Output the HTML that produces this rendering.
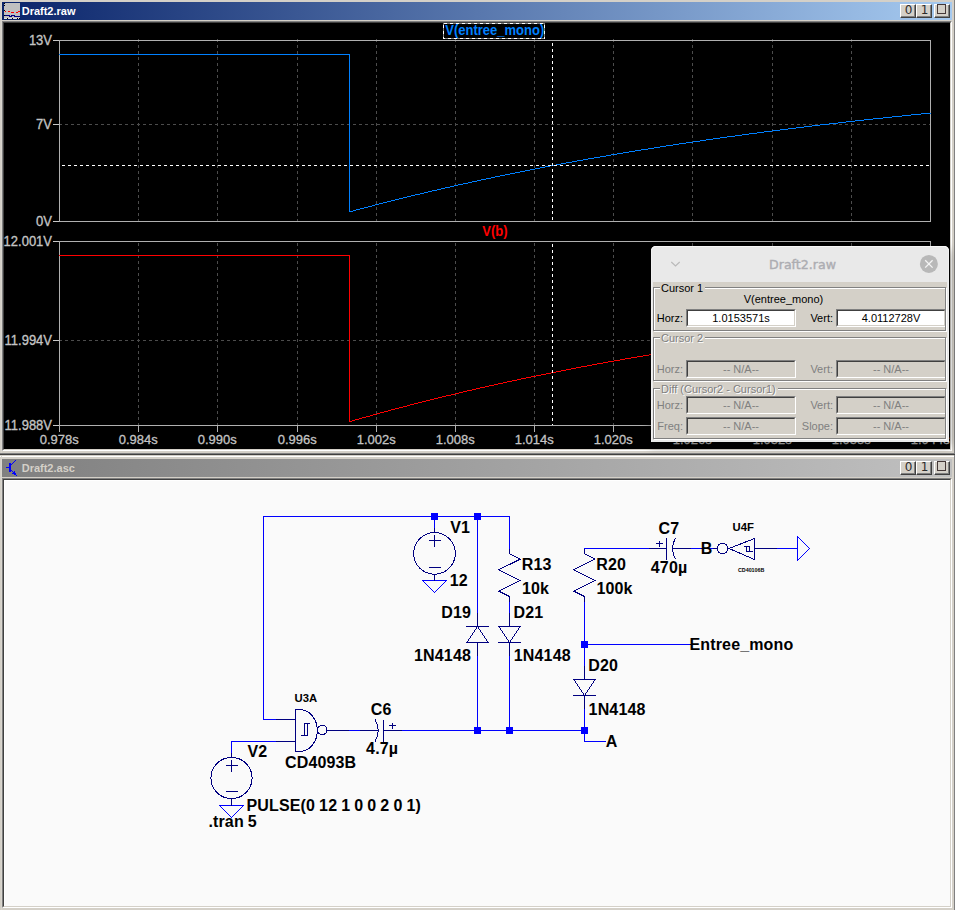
<!DOCTYPE html>
<html><head><meta charset="utf-8"><title>Draft2</title>
<style>
html,body{margin:0;padding:0}
body{width:955px;height:910px;background:#d4d0c8;overflow:hidden;position:relative;font-family:"Liberation Sans",sans-serif}
.abs{position:absolute}
.tb{position:absolute;left:2px;width:950px;height:18px}
.tt{position:absolute;left:19.7px;top:0;height:18px;line-height:19px;font-weight:bold;font-size:11px;white-space:nowrap}
.btn{position:absolute;top:2px;width:16px;height:14px;box-sizing:border-box;background:#d4d0c8;border:1px solid;border-color:#fff #404040 #404040 #fff;box-shadow:inset -1px -1px 0 #808080;font-family:"DejaVu Sans",sans-serif;font-size:12px;line-height:11px;text-align:center;color:#2c2c2c;padding-left:1px}
.sunk{position:absolute;box-sizing:border-box;border:1px solid;border-color:#808080 #fff #fff #808080}
.sunk>i{position:absolute;left:0;top:0;right:0;bottom:0;border:1px solid;border-color:#404040 #d4d0c8 #d4d0c8 #404040;display:block}
svg{position:absolute;left:0;top:0}
svg text{font-family:"Liberation Sans",sans-serif}
.dl{position:absolute;font-size:11px;line-height:13px;white-space:nowrap;color:#000}
.dis{color:#808080}
.grp{position:absolute;box-sizing:border-box;border:1px solid #808080;box-shadow:inset 1px 1px 0 #fff,1px 1px 0 #fff}
.gl{position:absolute;font-size:11px;line-height:13px;background:#d4d0c8;padding:0 2px 0 1px;white-space:nowrap}
.ed{position:absolute;box-sizing:border-box;width:110px;height:18px;border:1px solid;border-color:#808080 #fff #fff #808080;font-size:11px;text-align:center;line-height:16px;color:#000}
.ed.dis{color:#808080}
.ed>i{position:absolute;left:0;top:0;right:0;bottom:0;border:1px solid;border-color:#404040 #d4d0c8 #d4d0c8 #404040;display:block}
.ed>span{position:relative}
</style></head><body>

<div class="abs" style="left:1px;top:0;width:1px;height:453px;background:#d9d6cf"></div>
<div class="abs" style="left:954px;top:0;width:1px;height:910px;background:#808080"></div>
<div class="abs" style="left:0;top:453px;width:955px;height:1px;background:#808080"></div>
<div class="abs" style="left:0;top:454px;width:955px;height:1px;background:#404040"></div>
<div class="abs" style="left:0;top:455px;width:954px;height:1px;background:#d4d0c8"></div>
<div class="abs" style="left:0;top:456px;width:954px;height:1px;background:#fff"></div>
<div class="abs" style="left:1px;top:456px;width:1px;height:454px;background:#d9d6cf"></div>
<div class="tb" style="top:2px;background:linear-gradient(to right,#0a246a,#a6caf0)">
<svg width="16" height="16" style="left:2px;top:1px" shape-rendering="crispEdges"><rect width="16" height="16" fill="#c0c0c0"/><rect x="0" y="0" width="1" height="1" fill="#000"/><rect x="0" y="2" width="1" height="1" fill="#000"/><rect x="0" y="7" width="1" height="1" fill="#000"/><rect x="0" y="12" width="1" height="1" fill="#000"/><rect x="1" y="8" width="1" height="1" fill="#f00"/><rect x="4" y="8" width="2" height="1" fill="#f00"/><rect x="7" y="9" width="3" height="1" fill="#f00"/><rect x="12" y="9" width="2" height="1" fill="#f00"/><rect x="14" y="8" width="2" height="1" fill="#f00"/><path d="M1 12.5H5L6 13.5H7L8 12.5H10L11 13.5H16" stroke="#000080" fill="none"/><rect x="0" y="15" width="16" height="1" fill="#e0e0e0"/><rect x="3" y="15" width="1" height="1" fill="#000"/><rect x="8" y="15" width="1" height="1" fill="#000"/><rect x="13" y="15" width="1" height="1" fill="#000"/><rect x="15" y="15" width="1" height="1" fill="#000"/></svg>
<div class="tt" style="color:#fff">Draft2.raw</div>
<div class="btn" style="left:898px">0</div><div class="btn" style="left:914px">1</div><div class="btn" style="left:932px"><span style="position:absolute;left:2px;top:-1px;width:7px;height:8px;border:1px solid #453838"></span></div>
</div>
<div class="sunk" style="left:2px;top:21px;width:950px;height:430px"><i></i></div>
<div class="abs" style="left:4px;top:23px;width:946px;height:426px;background:#000"></div>
<div class="tb" style="top:459px;background:linear-gradient(to right,#808080,#c0c0c0)">
<svg width="16" height="18" style="left:2px;top:0" shape-rendering="crispEdges"><g fill="#0000ff"><rect x="5" y="4" width="2" height="9"/><rect x="2" y="8" width="3" height="1"/><rect x="7" y="5" width="1" height="1"/><rect x="8" y="4" width="1" height="1"/><rect x="9" y="3" width="1" height="1"/><rect x="10" y="2" width="1" height="1"/><rect x="11" y="1" width="1" height="1"/><rect x="7" y="11" width="1" height="1"/><rect x="8" y="12" width="1" height="1"/><rect x="9" y="13" width="1" height="1"/><rect x="10" y="14" width="1" height="1"/><rect x="11" y="15" width="1" height="1"/><rect x="12" y="16" width="1" height="1"/><rect x="8" y="14" width="1" height="1"/><rect x="9" y="14" width="1" height="1"/><rect x="11" y="14" width="1" height="1"/><rect x="10" y="12" width="1" height="1"/><rect x="10" y="13" width="1" height="1"/><rect x="10" y="15" width="1" height="1"/></g></svg>
<div class="tt" style="color:#d4d0c8">Draft2.asc</div>
<div class="btn" style="left:898px">0</div><div class="btn" style="left:914px">1</div><div class="btn" style="left:932px"><span style="position:absolute;left:2px;top:-1px;width:7px;height:8px;border:1px solid #453838"></span></div>
</div>
<div class="sunk" style="left:2px;top:478px;width:950px;height:430px"><i></i></div>
<div class="abs" style="left:4px;top:480px;width:946px;height:426px;background:#fafafa;box-shadow:inset 1px 1px 0 #fff"></div>
<svg width="950" height="449" viewBox="0 0 950 449">
<g shape-rendering="crispEdges" fill="none">
<path d="M138.5 39V221" stroke="#4c4c4c" stroke-dasharray="3 3"/><path d="M138.5 243V425" stroke="#4c4c4c" stroke-dasharray="3 3"/>
<path d="M217.5 39V221" stroke="#4c4c4c" stroke-dasharray="3 3"/><path d="M217.5 243V425" stroke="#4c4c4c" stroke-dasharray="3 3"/>
<path d="M297.5 39V221" stroke="#4c4c4c" stroke-dasharray="3 3"/><path d="M297.5 243V425" stroke="#4c4c4c" stroke-dasharray="3 3"/>
<path d="M376.5 39V221" stroke="#4c4c4c" stroke-dasharray="3 3"/><path d="M376.5 243V425" stroke="#4c4c4c" stroke-dasharray="3 3"/>
<path d="M455.5 39V221" stroke="#4c4c4c" stroke-dasharray="3 3"/><path d="M455.5 243V425" stroke="#4c4c4c" stroke-dasharray="3 3"/>
<path d="M534.5 39V221" stroke="#4c4c4c" stroke-dasharray="3 3"/><path d="M534.5 243V425" stroke="#4c4c4c" stroke-dasharray="3 3"/>
<path d="M613.5 39V221" stroke="#4c4c4c" stroke-dasharray="3 3"/><path d="M613.5 243V425" stroke="#4c4c4c" stroke-dasharray="3 3"/>
<path d="M692.5 39V221" stroke="#4c4c4c" stroke-dasharray="3 3"/><path d="M692.5 243V425" stroke="#4c4c4c" stroke-dasharray="3 3"/>
<path d="M772.5 39V221" stroke="#4c4c4c" stroke-dasharray="3 3"/><path d="M772.5 243V425" stroke="#4c4c4c" stroke-dasharray="3 3"/>
<path d="M851.5 39V221" stroke="#4c4c4c" stroke-dasharray="3 3"/><path d="M851.5 243V425" stroke="#4c4c4c" stroke-dasharray="3 3"/>
<path d="M59 124.5H930" stroke="#4c4c4c" stroke-dasharray="3 3"/>
<path d="M59 340.5H930" stroke="#4c4c4c" stroke-dasharray="3 3"/>
<rect x="59.5" y="40.5" width="871" height="181" stroke="#b0b0b0"/>
<rect x="59.5" y="241.5" width="871" height="184" stroke="#b0b0b0"/>
<path d="M53 40.5H59" stroke="#c8c8c8"/>
<path d="M53 124.5H59" stroke="#c8c8c8"/>
<path d="M53 221.5H59" stroke="#c8c8c8"/>
<path d="M53 241.5H59" stroke="#c8c8c8"/>
<path d="M53 340.5H59" stroke="#c8c8c8"/>
<path d="M53 425.5H59" stroke="#c8c8c8"/>
<path d="M59.5 425V432" stroke="#b0b0b0"/>
<path d="M138.5 425V432" stroke="#b0b0b0"/>
<path d="M217.5 425V432" stroke="#b0b0b0"/>
<path d="M297.5 425V432" stroke="#b0b0b0"/>
<path d="M376.5 425V432" stroke="#b0b0b0"/>
<path d="M455.5 425V432" stroke="#b0b0b0"/>
<path d="M534.5 425V432" stroke="#b0b0b0"/>
<path d="M613.5 425V432" stroke="#b0b0b0"/>
<path d="M692.5 425V432" stroke="#b0b0b0"/>
<path d="M772.5 425V432" stroke="#b0b0b0"/>
<path d="M851.5 425V432" stroke="#b0b0b0"/>
<path d="M930.5 425V432" stroke="#b0b0b0"/>
<path d="M59 54.5 L349.5 54.5 L349.5 211.5 L350.5 211.5 L351.5 211.5 L352.5 211.5 L353.5 210.5 L354.5 210.5 L355.5 210.5 L356.5 209.5 L357.5 209.5 L358.5 209.5 L359.5 209.5 L360.5 208.5 L361.5 208.5 L362.5 208.5 L363.5 208.5 L364.5 207.5 L365.5 207.5 L366.5 207.5 L367.5 207.5 L368.5 206.5 L369.5 206.5 L370.5 206.5 L371.5 206.5 L372.5 205.5 L373.5 205.5 L374.5 205.5 L375.5 204.5 L376.5 204.5 L377.5 204.5 L378.5 204.5 L379.5 203.5 L380.5 203.5 L381.5 203.5 L382.5 203.5 L383.5 202.5 L384.5 202.5 L385.5 202.5 L386.5 202.5 L387.5 201.5 L388.5 201.5 L389.5 201.5 L390.5 201.5 L391.5 200.5 L392.5 200.5 L393.5 200.5 L394.5 200.5 L395.5 199.5 L396.5 199.5 L397.5 199.5 L398.5 199.5 L399.5 198.5 L400.5 198.5 L401.5 198.5 L402.5 198.5 L403.5 197.5 L404.5 197.5 L405.5 197.5 L406.5 197.5 L407.5 196.5 L408.5 196.5 L409.5 196.5 L410.5 196.5 L411.5 195.5 L412.5 195.5 L413.5 195.5 L414.5 195.5 L415.5 194.5 L416.5 194.5 L417.5 194.5 L418.5 194.5 L419.5 194.5 L420.5 193.5 L421.5 193.5 L422.5 193.5 L423.5 193.5 L424.5 192.5 L425.5 192.5 L426.5 192.5 L427.5 192.5 L428.5 191.5 L429.5 191.5 L430.5 191.5 L431.5 191.5 L432.5 190.5 L433.5 190.5 L434.5 190.5 L435.5 190.5 L436.5 190.5 L437.5 189.5 L438.5 189.5 L439.5 189.5 L440.5 189.5 L441.5 188.5 L442.5 188.5 L443.5 188.5 L444.5 188.5 L445.5 187.5 L446.5 187.5 L447.5 187.5 L448.5 187.5 L449.5 187.5 L450.5 186.5 L451.5 186.5 L452.5 186.5 L453.5 186.5 L454.5 185.5 L455.5 185.5 L456.5 185.5 L457.5 185.5 L458.5 184.5 L459.5 184.5 L460.5 184.5 L461.5 184.5 L462.5 184.5 L463.5 183.5 L464.5 183.5 L465.5 183.5 L466.5 183.5 L467.5 183.5 L468.5 182.5 L469.5 182.5 L470.5 182.5 L471.5 182.5 L472.5 181.5 L473.5 181.5 L474.5 181.5 L475.5 181.5 L476.5 181.5 L477.5 180.5 L478.5 180.5 L479.5 180.5 L480.5 180.5 L481.5 179.5 L482.5 179.5 L483.5 179.5 L484.5 179.5 L485.5 179.5 L486.5 178.5 L487.5 178.5 L488.5 178.5 L489.5 178.5 L490.5 178.5 L491.5 177.5 L492.5 177.5 L493.5 177.5 L494.5 177.5 L495.5 176.5 L496.5 176.5 L497.5 176.5 L498.5 176.5 L499.5 176.5 L500.5 175.5 L501.5 175.5 L502.5 175.5 L503.5 175.5 L504.5 175.5 L505.5 174.5 L506.5 174.5 L507.5 174.5 L508.5 174.5 L509.5 174.5 L510.5 173.5 L511.5 173.5 L512.5 173.5 L513.5 173.5 L514.5 173.5 L515.5 172.5 L516.5 172.5 L517.5 172.5 L518.5 172.5 L519.5 172.5 L520.5 171.5 L521.5 171.5 L522.5 171.5 L523.5 171.5 L524.5 171.5 L525.5 170.5 L526.5 170.5 L527.5 170.5 L528.5 170.5 L529.5 170.5 L530.5 169.5 L531.5 169.5 L532.5 169.5 L533.5 169.5 L534.5 169.5 L535.5 168.5 L536.5 168.5 L537.5 168.5 L538.5 168.5 L539.5 168.5 L540.5 167.5 L541.5 167.5 L542.5 167.5 L543.5 167.5 L544.5 167.5 L545.5 166.5 L546.5 166.5 L547.5 166.5 L548.5 166.5 L549.5 166.5 L550.5 165.5 L551.5 165.5 L552.5 165.5 L553.5 165.5 L554.5 165.5 L555.5 165.5 L556.5 164.5 L557.5 164.5 L558.5 164.5 L559.5 164.5 L560.5 164.5 L561.5 163.5 L562.5 163.5 L563.5 163.5 L564.5 163.5 L565.5 163.5 L566.5 162.5 L567.5 162.5 L568.5 162.5 L569.5 162.5 L570.5 162.5 L571.5 162.5 L572.5 161.5 L573.5 161.5 L574.5 161.5 L575.5 161.5 L576.5 161.5 L577.5 160.5 L578.5 160.5 L579.5 160.5 L580.5 160.5 L581.5 160.5 L582.5 160.5 L583.5 159.5 L584.5 159.5 L585.5 159.5 L586.5 159.5 L587.5 159.5 L588.5 158.5 L589.5 158.5 L590.5 158.5 L591.5 158.5 L592.5 158.5 L593.5 158.5 L594.5 157.5 L595.5 157.5 L596.5 157.5 L597.5 157.5 L598.5 157.5 L599.5 157.5 L600.5 156.5 L601.5 156.5 L602.5 156.5 L603.5 156.5 L604.5 156.5 L605.5 156.5 L606.5 155.5 L607.5 155.5 L608.5 155.5 L609.5 155.5 L610.5 155.5 L611.5 154.5 L612.5 154.5 L613.5 154.5 L614.5 154.5 L615.5 154.5 L616.5 154.5 L617.5 153.5 L618.5 153.5 L619.5 153.5 L620.5 153.5 L621.5 153.5 L622.5 153.5 L623.5 152.5 L624.5 152.5 L625.5 152.5 L626.5 152.5 L627.5 152.5 L628.5 152.5 L629.5 151.5 L630.5 151.5 L631.5 151.5 L632.5 151.5 L633.5 151.5 L634.5 151.5 L635.5 150.5 L636.5 150.5 L637.5 150.5 L638.5 150.5 L639.5 150.5 L640.5 150.5 L641.5 149.5 L642.5 149.5 L643.5 149.5 L644.5 149.5 L645.5 149.5 L646.5 149.5 L647.5 149.5 L648.5 148.5 L649.5 148.5 L650.5 148.5 L651.5 148.5 L652.5 148.5 L653.5 148.5 L654.5 147.5 L655.5 147.5 L656.5 147.5 L657.5 147.5 L658.5 147.5 L659.5 147.5 L660.5 146.5 L661.5 146.5 L662.5 146.5 L663.5 146.5 L664.5 146.5 L665.5 146.5 L666.5 145.5 L667.5 145.5 L668.5 145.5 L669.5 145.5 L670.5 145.5 L671.5 145.5 L672.5 145.5 L673.5 144.5 L674.5 144.5 L675.5 144.5 L676.5 144.5 L677.5 144.5 L678.5 144.5 L679.5 143.5 L680.5 143.5 L681.5 143.5 L682.5 143.5 L683.5 143.5 L684.5 143.5 L685.5 143.5 L686.5 142.5 L687.5 142.5 L688.5 142.5 L689.5 142.5 L690.5 142.5 L691.5 142.5 L692.5 142.5 L693.5 141.5 L694.5 141.5 L695.5 141.5 L696.5 141.5 L697.5 141.5 L698.5 141.5 L699.5 141.5 L700.5 140.5 L701.5 140.5 L702.5 140.5 L703.5 140.5 L704.5 140.5 L705.5 140.5 L706.5 139.5 L707.5 139.5 L708.5 139.5 L709.5 139.5 L710.5 139.5 L711.5 139.5 L712.5 139.5 L713.5 138.5 L714.5 138.5 L715.5 138.5 L716.5 138.5 L717.5 138.5 L718.5 138.5 L719.5 138.5 L720.5 137.5 L721.5 137.5 L722.5 137.5 L723.5 137.5 L724.5 137.5 L725.5 137.5 L726.5 137.5 L727.5 136.5 L728.5 136.5 L729.5 136.5 L730.5 136.5 L731.5 136.5 L732.5 136.5 L733.5 136.5 L734.5 136.5 L735.5 135.5 L736.5 135.5 L737.5 135.5 L738.5 135.5 L739.5 135.5 L740.5 135.5 L741.5 135.5 L742.5 134.5 L743.5 134.5 L744.5 134.5 L745.5 134.5 L746.5 134.5 L747.5 134.5 L748.5 134.5 L749.5 133.5 L750.5 133.5 L751.5 133.5 L752.5 133.5 L753.5 133.5 L754.5 133.5 L755.5 133.5 L756.5 133.5 L757.5 132.5 L758.5 132.5 L759.5 132.5 L760.5 132.5 L761.5 132.5 L762.5 132.5 L763.5 132.5 L764.5 131.5 L765.5 131.5 L766.5 131.5 L767.5 131.5 L768.5 131.5 L769.5 131.5 L770.5 131.5 L771.5 131.5 L772.5 130.5 L773.5 130.5 L774.5 130.5 L775.5 130.5 L776.5 130.5 L777.5 130.5 L778.5 130.5 L779.5 130.5 L780.5 129.5 L781.5 129.5 L782.5 129.5 L783.5 129.5 L784.5 129.5 L785.5 129.5 L786.5 129.5 L787.5 129.5 L788.5 128.5 L789.5 128.5 L790.5 128.5 L791.5 128.5 L792.5 128.5 L793.5 128.5 L794.5 128.5 L795.5 128.5 L796.5 127.5 L797.5 127.5 L798.5 127.5 L799.5 127.5 L800.5 127.5 L801.5 127.5 L802.5 127.5 L803.5 127.5 L804.5 126.5 L805.5 126.5 L806.5 126.5 L807.5 126.5 L808.5 126.5 L809.5 126.5 L810.5 126.5 L811.5 126.5 L812.5 125.5 L813.5 125.5 L814.5 125.5 L815.5 125.5 L816.5 125.5 L817.5 125.5 L818.5 125.5 L819.5 125.5 L820.5 124.5 L821.5 124.5 L822.5 124.5 L823.5 124.5 L824.5 124.5 L825.5 124.5 L826.5 124.5 L827.5 124.5 L828.5 124.5 L829.5 123.5 L830.5 123.5 L831.5 123.5 L832.5 123.5 L833.5 123.5 L834.5 123.5 L835.5 123.5 L836.5 123.5 L837.5 123.5 L838.5 122.5 L839.5 122.5 L840.5 122.5 L841.5 122.5 L842.5 122.5 L843.5 122.5 L844.5 122.5 L845.5 122.5 L846.5 121.5 L847.5 121.5 L848.5 121.5 L849.5 121.5 L850.5 121.5 L851.5 121.5 L852.5 121.5 L853.5 121.5 L854.5 121.5 L855.5 120.5 L856.5 120.5 L857.5 120.5 L858.5 120.5 L859.5 120.5 L860.5 120.5 L861.5 120.5 L862.5 120.5 L863.5 120.5 L864.5 119.5 L865.5 119.5 L866.5 119.5 L867.5 119.5 L868.5 119.5 L869.5 119.5 L870.5 119.5 L871.5 119.5 L872.5 119.5 L873.5 118.5 L874.5 118.5 L875.5 118.5 L876.5 118.5 L877.5 118.5 L878.5 118.5 L879.5 118.5 L880.5 118.5 L881.5 118.5 L882.5 118.5 L883.5 117.5 L884.5 117.5 L885.5 117.5 L886.5 117.5 L887.5 117.5 L888.5 117.5 L889.5 117.5 L890.5 117.5 L891.5 117.5 L892.5 116.5 L893.5 116.5 L894.5 116.5 L895.5 116.5 L896.5 116.5 L897.5 116.5 L898.5 116.5 L899.5 116.5 L900.5 116.5 L901.5 116.5 L902.5 115.5 L903.5 115.5 L904.5 115.5 L905.5 115.5 L906.5 115.5 L907.5 115.5 L908.5 115.5 L909.5 115.5 L910.5 115.5 L911.5 114.5 L912.5 114.5 L913.5 114.5 L914.5 114.5 L915.5 114.5 L916.5 114.5 L917.5 114.5 L918.5 114.5 L919.5 114.5 L920.5 114.5 L921.5 113.5 L922.5 113.5 L923.5 113.5 L924.5 113.5 L925.5 113.5 L926.5 113.5 L927.5 113.5 L928.5 113.5 L929.5 113.5 L930.5 113.5" stroke="#0080ff"/>
<path d="M59 255.5 L349.5 255.5 L349.5 421.5 L350.5 421.5 L351.5 421.5 L352.5 420.5 L353.5 420.5 L354.5 420.5 L355.5 419.5 L356.5 419.5 L357.5 419.5 L358.5 419.5 L359.5 418.5 L360.5 418.5 L361.5 418.5 L362.5 417.5 L363.5 417.5 L364.5 417.5 L365.5 417.5 L366.5 416.5 L367.5 416.5 L368.5 416.5 L369.5 416.5 L370.5 415.5 L371.5 415.5 L372.5 415.5 L373.5 414.5 L374.5 414.5 L375.5 414.5 L376.5 414.5 L377.5 413.5 L378.5 413.5 L379.5 413.5 L380.5 412.5 L381.5 412.5 L382.5 412.5 L383.5 412.5 L384.5 411.5 L385.5 411.5 L386.5 411.5 L387.5 411.5 L388.5 410.5 L389.5 410.5 L390.5 410.5 L391.5 409.5 L392.5 409.5 L393.5 409.5 L394.5 409.5 L395.5 408.5 L396.5 408.5 L397.5 408.5 L398.5 408.5 L399.5 407.5 L400.5 407.5 L401.5 407.5 L402.5 407.5 L403.5 406.5 L404.5 406.5 L405.5 406.5 L406.5 406.5 L407.5 405.5 L408.5 405.5 L409.5 405.5 L410.5 404.5 L411.5 404.5 L412.5 404.5 L413.5 404.5 L414.5 403.5 L415.5 403.5 L416.5 403.5 L417.5 403.5 L418.5 402.5 L419.5 402.5 L420.5 402.5 L421.5 402.5 L422.5 401.5 L423.5 401.5 L424.5 401.5 L425.5 401.5 L426.5 400.5 L427.5 400.5 L428.5 400.5 L429.5 400.5 L430.5 399.5 L431.5 399.5 L432.5 399.5 L433.5 399.5 L434.5 398.5 L435.5 398.5 L436.5 398.5 L437.5 398.5 L438.5 397.5 L439.5 397.5 L440.5 397.5 L441.5 397.5 L442.5 396.5 L443.5 396.5 L444.5 396.5 L445.5 396.5 L446.5 395.5 L447.5 395.5 L448.5 395.5 L449.5 395.5 L450.5 395.5 L451.5 394.5 L452.5 394.5 L453.5 394.5 L454.5 394.5 L455.5 393.5 L456.5 393.5 L457.5 393.5 L458.5 393.5 L459.5 392.5 L460.5 392.5 L461.5 392.5 L462.5 392.5 L463.5 391.5 L464.5 391.5 L465.5 391.5 L466.5 391.5 L467.5 390.5 L468.5 390.5 L469.5 390.5 L470.5 390.5 L471.5 390.5 L472.5 389.5 L473.5 389.5 L474.5 389.5 L475.5 389.5 L476.5 388.5 L477.5 388.5 L478.5 388.5 L479.5 388.5 L480.5 387.5 L481.5 387.5 L482.5 387.5 L483.5 387.5 L484.5 387.5 L485.5 386.5 L486.5 386.5 L487.5 386.5 L488.5 386.5 L489.5 385.5 L490.5 385.5 L491.5 385.5 L492.5 385.5 L493.5 385.5 L494.5 384.5 L495.5 384.5 L496.5 384.5 L497.5 384.5 L498.5 383.5 L499.5 383.5 L500.5 383.5 L501.5 383.5 L502.5 383.5 L503.5 382.5 L504.5 382.5 L505.5 382.5 L506.5 382.5 L507.5 381.5 L508.5 381.5 L509.5 381.5 L510.5 381.5 L511.5 381.5 L512.5 380.5 L513.5 380.5 L514.5 380.5 L515.5 380.5 L516.5 380.5 L517.5 379.5 L518.5 379.5 L519.5 379.5 L520.5 379.5 L521.5 378.5 L522.5 378.5 L523.5 378.5 L524.5 378.5 L525.5 378.5 L526.5 377.5 L527.5 377.5 L528.5 377.5 L529.5 377.5 L530.5 377.5 L531.5 376.5 L532.5 376.5 L533.5 376.5 L534.5 376.5 L535.5 376.5 L536.5 375.5 L537.5 375.5 L538.5 375.5 L539.5 375.5 L540.5 375.5 L541.5 374.5 L542.5 374.5 L543.5 374.5 L544.5 374.5 L545.5 374.5 L546.5 373.5 L547.5 373.5 L548.5 373.5 L549.5 373.5 L550.5 373.5 L551.5 372.5 L552.5 372.5 L553.5 372.5 L554.5 372.5 L555.5 372.5 L556.5 371.5 L557.5 371.5 L558.5 371.5 L559.5 371.5 L560.5 371.5 L561.5 370.5 L562.5 370.5 L563.5 370.5 L564.5 370.5 L565.5 370.5 L566.5 369.5 L567.5 369.5 L568.5 369.5 L569.5 369.5 L570.5 369.5 L571.5 368.5 L572.5 368.5 L573.5 368.5 L574.5 368.5 L575.5 368.5 L576.5 367.5 L577.5 367.5 L578.5 367.5 L579.5 367.5 L580.5 367.5 L581.5 366.5 L582.5 366.5 L583.5 366.5 L584.5 366.5 L585.5 366.5 L586.5 366.5 L587.5 365.5 L588.5 365.5 L589.5 365.5 L590.5 365.5 L591.5 365.5 L592.5 364.5 L593.5 364.5 L594.5 364.5 L595.5 364.5 L596.5 364.5 L597.5 363.5 L598.5 363.5 L599.5 363.5 L600.5 363.5 L601.5 363.5 L602.5 363.5 L603.5 362.5 L604.5 362.5 L605.5 362.5 L606.5 362.5 L607.5 362.5 L608.5 361.5 L609.5 361.5 L610.5 361.5 L611.5 361.5 L612.5 361.5 L613.5 361.5 L614.5 360.5 L615.5 360.5 L616.5 360.5 L617.5 360.5 L618.5 360.5 L619.5 360.5 L620.5 359.5 L621.5 359.5 L622.5 359.5 L623.5 359.5 L624.5 359.5 L625.5 358.5 L626.5 358.5 L627.5 358.5 L628.5 358.5 L629.5 358.5 L630.5 358.5 L631.5 357.5 L632.5 357.5 L633.5 357.5 L634.5 357.5 L635.5 357.5 L636.5 357.5 L637.5 356.5 L638.5 356.5 L639.5 356.5 L640.5 356.5 L641.5 356.5 L642.5 356.5 L643.5 355.5 L644.5 355.5 L645.5 355.5 L646.5 355.5 L647.5 355.5 L648.5 355.5 L649.5 354.5 L650.5 354.5 L651.5 354.5 L652.5 354.5 L653.5 354.5 L654.5 354.5 L655.5 353.5 L656.5 353.5 L657.5 353.5 L658.5 353.5 L659.5 353.5 L660.5 353.5 L661.5 352.5 L662.5 352.5 L663.5 352.5 L664.5 352.5 L665.5 352.5 L666.5 352.5 L667.5 351.5 L668.5 351.5 L669.5 351.5 L670.5 351.5 L671.5 351.5 L672.5 351.5 L673.5 350.5 L674.5 350.5 L675.5 350.5 L676.5 350.5 L677.5 350.5 L678.5 350.5 L679.5 349.5 L680.5 349.5 L681.5 349.5 L682.5 349.5 L683.5 349.5 L684.5 349.5 L685.5 349.5 L686.5 348.5 L687.5 348.5 L688.5 348.5 L689.5 348.5 L690.5 348.5 L691.5 348.5 L692.5 347.5 L693.5 347.5 L694.5 347.5 L695.5 347.5 L696.5 347.5 L697.5 347.5 L698.5 347.5 L699.5 346.5 L700.5 346.5 L701.5 346.5 L702.5 346.5 L703.5 346.5 L704.5 346.5 L705.5 345.5 L706.5 345.5 L707.5 345.5 L708.5 345.5 L709.5 345.5 L710.5 345.5 L711.5 345.5 L712.5 344.5 L713.5 344.5 L714.5 344.5 L715.5 344.5 L716.5 344.5 L717.5 344.5 L718.5 343.5 L719.5 343.5 L720.5 343.5 L721.5 343.5 L722.5 343.5 L723.5 343.5 L724.5 343.5 L725.5 342.5 L726.5 342.5 L727.5 342.5 L728.5 342.5 L729.5 342.5 L730.5 342.5 L731.5 342.5 L732.5 341.5 L733.5 341.5 L734.5 341.5 L735.5 341.5 L736.5 341.5 L737.5 341.5 L738.5 341.5 L739.5 340.5 L740.5 340.5 L741.5 340.5 L742.5 340.5 L743.5 340.5 L744.5 340.5 L745.5 340.5 L746.5 339.5 L747.5 339.5 L748.5 339.5 L749.5 339.5 L750.5 339.5 L751.5 339.5 L752.5 339.5 L753.5 338.5 L754.5 338.5 L755.5 338.5 L756.5 338.5 L757.5 338.5 L758.5 338.5 L759.5 338.5 L760.5 338.5 L761.5 337.5 L762.5 337.5 L763.5 337.5 L764.5 337.5 L765.5 337.5 L766.5 337.5 L767.5 337.5 L768.5 336.5 L769.5 336.5 L770.5 336.5 L771.5 336.5 L772.5 336.5 L773.5 336.5 L774.5 336.5 L775.5 336.5 L776.5 335.5 L777.5 335.5 L778.5 335.5 L779.5 335.5 L780.5 335.5 L781.5 335.5 L782.5 335.5 L783.5 334.5 L784.5 334.5 L785.5 334.5 L786.5 334.5 L787.5 334.5 L788.5 334.5 L789.5 334.5 L790.5 334.5 L791.5 333.5 L792.5 333.5 L793.5 333.5 L794.5 333.5 L795.5 333.5 L796.5 333.5 L797.5 333.5 L798.5 333.5 L799.5 332.5 L800.5 332.5 L801.5 332.5 L802.5 332.5 L803.5 332.5 L804.5 332.5 L805.5 332.5 L806.5 332.5 L807.5 331.5 L808.5 331.5 L809.5 331.5 L810.5 331.5 L811.5 331.5 L812.5 331.5 L813.5 331.5 L814.5 331.5 L815.5 330.5 L816.5 330.5 L817.5 330.5 L818.5 330.5 L819.5 330.5 L820.5 330.5 L821.5 330.5 L822.5 330.5 L823.5 329.5 L824.5 329.5 L825.5 329.5 L826.5 329.5 L827.5 329.5 L828.5 329.5 L829.5 329.5 L830.5 329.5 L831.5 328.5 L832.5 328.5 L833.5 328.5 L834.5 328.5 L835.5 328.5 L836.5 328.5 L837.5 328.5 L838.5 328.5 L839.5 327.5 L840.5 327.5 L841.5 327.5 L842.5 327.5 L843.5 327.5 L844.5 327.5 L845.5 327.5 L846.5 327.5 L847.5 327.5 L848.5 326.5 L849.5 326.5 L850.5 326.5 L851.5 326.5 L852.5 326.5 L853.5 326.5 L854.5 326.5 L855.5 326.5 L856.5 326.5 L857.5 325.5 L858.5 325.5 L859.5 325.5 L860.5 325.5 L861.5 325.5 L862.5 325.5 L863.5 325.5 L864.5 325.5 L865.5 324.5 L866.5 324.5 L867.5 324.5 L868.5 324.5 L869.5 324.5 L870.5 324.5 L871.5 324.5 L872.5 324.5 L873.5 324.5 L874.5 323.5 L875.5 323.5 L876.5 323.5 L877.5 323.5 L878.5 323.5 L879.5 323.5 L880.5 323.5 L881.5 323.5 L882.5 323.5 L883.5 322.5 L884.5 322.5 L885.5 322.5 L886.5 322.5 L887.5 322.5 L888.5 322.5 L889.5 322.5 L890.5 322.5 L891.5 322.5 L892.5 322.5 L893.5 321.5 L894.5 321.5 L895.5 321.5 L896.5 321.5 L897.5 321.5 L898.5 321.5 L899.5 321.5 L900.5 321.5 L901.5 321.5 L902.5 320.5 L903.5 320.5 L904.5 320.5 L905.5 320.5 L906.5 320.5 L907.5 320.5 L908.5 320.5 L909.5 320.5 L910.5 320.5 L911.5 320.5 L912.5 319.5 L913.5 319.5 L914.5 319.5 L915.5 319.5 L916.5 319.5 L917.5 319.5 L918.5 319.5 L919.5 319.5 L920.5 319.5 L921.5 318.5 L922.5 318.5 L923.5 318.5 L924.5 318.5 L925.5 318.5 L926.5 318.5 L927.5 318.5 L928.5 318.5 L929.5 318.5 L930.5 318.5" stroke="#ff0000"/>
<path d="M552.5 43V221" stroke="#fff" stroke-dasharray="3 3"/><path d="M552.5 244V425" stroke="#fff" stroke-dasharray="3 3"/>
<path d="M62 165.5H930" stroke="#fff" stroke-dasharray="3 3"/>
<rect x="443.5" y="23.5" width="101" height="15" stroke="#808080"/>
<rect x="443.5" y="23.5" width="101" height="15" stroke="#fff" stroke-dasharray="3 3"/>
</g>
<g font-size="13" fill="#c4c4c4" stroke="#c4c4c4" stroke-width="0.3" text-anchor="end">
<text x="52" y="0" transform="translate(0,45.3) scale(1,1.06)">13V</text>
<text x="52" y="0" transform="translate(0,129.3) scale(1,1.06)">7V</text>
<text x="52" y="0" transform="translate(0,226.3) scale(1,1.06)">0V</text>
<text x="52" y="0" transform="translate(0,246.3) scale(1,1.06)">12.001V</text>
<text x="52" y="0" transform="translate(0,345.3) scale(1,1.06)">11.994V</text>
<text x="52" y="0" transform="translate(0,430.3) scale(1,1.06)">11.988V</text>
</g>
<g font-size="13" fill="#c4c4c4" stroke="#c4c4c4" stroke-width="0.3" text-anchor="middle">
<text x="59.3" y="0" transform="translate(0,443.7) scale(1,1.02)">0.978s</text>
<text x="138.3" y="0" transform="translate(0,443.7) scale(1,1.02)">0.984s</text>
<text x="217.3" y="0" transform="translate(0,443.7) scale(1,1.02)">0.990s</text>
<text x="297.3" y="0" transform="translate(0,443.7) scale(1,1.02)">0.996s</text>
<text x="376.3" y="0" transform="translate(0,443.7) scale(1,1.02)">1.002s</text>
<text x="455.3" y="0" transform="translate(0,443.7) scale(1,1.02)">1.008s</text>
<text x="534.3" y="0" transform="translate(0,443.7) scale(1,1.02)">1.014s</text>
<text x="613.3" y="0" transform="translate(0,443.7) scale(1,1.02)">1.020s</text>
<text x="692.3" y="0" transform="translate(0,443.7) scale(1,1.02)">1.026s</text>
<text x="772.3" y="0" transform="translate(0,443.7) scale(1,1.02)">1.032s</text>
<text x="851.3" y="0" transform="translate(0,443.7) scale(1,1.02)">1.038s</text>
<text x="930.3" y="0" transform="translate(0,443.7) scale(1,1.02)">1.044s</text>
</g>
<text x="494.8" y="0" transform="translate(0,34.8) scale(1,1.07)" font-size="13" font-weight="bold" fill="#0080ff" text-anchor="middle">V(entree_mono)</text>
<text x="495" y="0" transform="translate(0,235.8) scale(1,1.07)" font-size="13" font-weight="bold" fill="#ff0000" text-anchor="middle">V(b)</text>
</svg>
<div class="abs" style="left:651px;top:246px;width:298px;height:196px;background:#e9e9e9;border-radius:5px 5px 0 0;box-shadow:inset 0 1px 0 #f8f8f8,inset 1px 0 0 #f0f0f0,inset -1px 0 0 #f0f0f0,0 3px 8px 1px rgba(0,0,0,0.4)">
<div class="abs" style="left:2px;top:36px;width:294px;height:158px;background:#d4d0c8"></div>
<div class="abs" style="left:0;top:10px;width:303px;text-align:center;font-family:'DejaVu Sans',sans-serif;font-size:12.6px;line-height:18px;color:#adadb2;-webkit-text-stroke:0.4px #adadb2">Draft2.raw</div>
<svg width="298" height="37"><path d="M20.3 16 L24.5 20 L28.7 16" stroke="#b9b9b9" stroke-width="1.1" fill="none"/><circle cx="277.9" cy="17.9" r="9" fill="#b8b8b8"/><path d="M274.2 14.2L281.6 21.6M281.6 14.2L274.2 21.6" stroke="#f4f4f4" stroke-width="1.3" fill="none"/></svg>
<div class="dl" style="left:38px;top:47px;width:189px;text-align:center">V(entree_mono)</div>
<div class="dl" style="left:2px;top:66px;width:30px;text-align:right">Horz:</div>
<div class="ed" style="left:35px;top:63px;background:#fff"><i></i><span>1.0153571s</span></div>
<div class="dl" style="left:142px;top:66px;width:40px;text-align:right">Vert:</div>
<div class="ed" style="left:185px;top:63px;background:#fff"><i></i><span>4.0112728V</span></div>
<div class="dl dis" style="left:2px;top:117px;width:30px;text-align:right">Horz:</div>
<div class="ed dis" style="left:35px;top:114px;background:#d4d0c8"><i></i><span>-- N/A--</span></div>
<div class="dl dis" style="left:142px;top:117px;width:40px;text-align:right">Vert:</div>
<div class="ed dis" style="left:185px;top:114px;background:#d4d0c8"><i></i><span>-- N/A--</span></div>
<div class="dl dis" style="left:2px;top:153px;width:30px;text-align:right">Horz:</div>
<div class="ed dis" style="left:35px;top:150px;background:#d4d0c8"><i></i><span>-- N/A--</span></div>
<div class="dl dis" style="left:142px;top:153px;width:40px;text-align:right">Vert:</div>
<div class="ed dis" style="left:185px;top:150px;background:#d4d0c8"><i></i><span>-- N/A--</span></div>
<div class="dl dis" style="left:2px;top:174px;width:30px;text-align:right">Freq:</div>
<div class="ed dis" style="left:35px;top:171px;background:#d4d0c8"><i></i><span>-- N/A--</span></div>
<div class="dl dis" style="left:142px;top:174px;width:40px;text-align:right">Slope:</div>
<div class="ed dis" style="left:185px;top:171px;background:#d4d0c8"><i></i><span>-- N/A--</span></div>
<div class="grp" style="left:2px;top:41px;width:293px;height:44px"></div>
<div class="gl" style="left:9px;top:36px">Cursor 1</div>
<div class="grp" style="left:2px;top:91px;width:293px;height:44px"></div>
<div class="gl dis" style="left:9px;top:86px;text-shadow:1px 1px 0 #fff">Cursor 2</div>
<div class="grp" style="left:2px;top:142px;width:293px;height:51px"></div>
<div class="gl dis" style="left:9px;top:137px;text-shadow:1px 1px 0 #fff">Diff (Cursor2 - Cursor1)</div>
</div>
<svg width="955" height="910" viewBox="0 0 955 910">
<g shape-rendering="crispEdges" fill="none" stroke-width="1">
<path d="M263.5 719.5H275.5M263.5 720V516.5H510M434.5 516.5V528M477.5 516.5V613.5M477.5 655.5V730.5M509.5 516.5V549M509.5 601.5V613M509.5 655.5V730.5M348.5 730.5H360.5M402 730.5H585M584.5 548V548.5H649M584.5 601.5V666.5M584.5 708.5V742M584 741.5H606M584.5 644.5H691M691 548.5H712.5M776.5 548.5H797.5M231.5 752.5V741.5H275.5M422 580.5H447M422.5 580.5L434.5 592.5L446.5 580.5M219 805.5H244M219.5 805.5L231.5 817.5L243.5 805.5M797.5 536V561M797.5 536.5L809.5 548.5L797.5 560.5" stroke="#0000ff"/>
<path d="M434.5 527.5V532.6M434.5 574.1999999999999V581.0M429.0 540.5H440.5M434.5 535.0V546.5M429.0 567.5H440.5M231.5 752.5V757.4M231.5 798.6V806.0M226.0 765.5H237.5M231.5 760.0V771.5M226.0 791.5H237.5M509.5 548.5V553.8L520.2 559.1L498.8 569.8L520.2 580.5L498.8 591.1L509.5 596.5V602M584.5 548.5V553.8L595.2 559.1L573.8 569.8L595.2 580.5L573.8 591.1L584.5 596.5V602M509.5 613V626.5M498.8 626.5H520.2L509.5 642.5ZM498.0 642.5H521.0M509.5 642.5V656M477.5 613V626.5M466.0 626.5H489.0M477.5 626.5L466.8 642.5H488.2ZM477.5 642.5V656M584.5 666V679.5M573.8 679.5H595.2L584.5 695.5ZM573.0 695.5H596.0M584.5 695.5V709M648.5 548.5H666.5M666.5 538V560M672.5 548.5H691M656 543.5H662.5M659.5 540.5V547M360 730.5H378.5M383.5 719.5V742M383.5 730.5H402M389 725.5H395.5M392.5 722.5V729M275.5 719.5H295.5M275.5 741.5H295.5M295.5 709V752M295 709.5H300M295 751.5H300M327 730.5H348.5M301 735.5H308M307.5 723V736M304 723.5H310M304.5 723V736M712.5 548.5H717.5M729 548.5L754.5 538.5V559.5ZM754.5 548.5H776.5M744 546.5H750M746.5 546V552M746 551.5H753M749.5 546V552" stroke="#000080"/>
<circle cx="434.5" cy="553.4" r="20.8" stroke="#000080"/>
<circle cx="231.5" cy="778.0" r="20.6" stroke="#000080"/>
<circle cx="322.3" cy="730" r="4.7" stroke="#000080"/>
<circle cx="722.5" cy="548.5" r="5.2" stroke="#000080"/>
<path d="M299.5 709.5A17.8 21 0 0 1 299.5 751.5" stroke="#000080"/>
<path d="M675.5 538Q669.5 548.5 675.5 559.5" stroke="#000080"/>
<path d="M375 719.5Q381.5 730.5 375 741.5" stroke="#000080"/>
<rect x="431" y="513" width="7" height="7" fill="#0000ff" stroke="none"/>
<rect x="474" y="513" width="7" height="7" fill="#0000ff" stroke="none"/>
<rect x="581" y="641" width="7" height="7" fill="#0000ff" stroke="none"/>
<rect x="474" y="727" width="7" height="7" fill="#0000ff" stroke="none"/>
<rect x="506" y="727" width="7" height="7" fill="#0000ff" stroke="none"/>
<rect x="581" y="727" width="7" height="7" fill="#0000ff" stroke="none"/>
</g>
<g font-weight="bold" font-size="16" fill="#000" letter-spacing="0.15">
<text x="450.2" y="532.9">V1</text>
<text x="449.8" y="585.8">12</text>
<text x="521.7" y="569.5">R13</text>
<text x="521.9" y="593.7">10k</text>
<text x="513.6" y="617.6">D21</text>
<text x="513.8" y="660.7">1N4148</text>
<text x="596.2" y="569.5">R20</text>
<text x="596.4" y="593.7">100k</text>
<text x="588.3" y="671.3">D20</text>
<text x="588.6" y="714.6">1N4148</text>
<text x="689.5" y="649.8">Entree_mono</text>
<text x="247.4" y="756.7">V2</text>
<text x="246.5" y="810.5" word-spacing="-0.6">PULSE(0 12 1 0 0 2 0 1)</text>
<text x="285" y="767.5">CD4093B</text>
<text x="208.4" y="826.8" word-spacing="-0.6">.tran 5</text>
<text x="370.8" y="714.6">C6</text>
<text x="366.1" y="754.1">4.7µ</text>
<text x="658.6" y="534.3">C7</text>
<text x="650.8" y="572.5">470µ</text>
<text x="700.7" y="553.7">B</text>
<text x="605.7" y="746.7">A</text>
<text x="471" y="617.7" text-anchor="end">D19</text>
<text x="471" y="660.7" text-anchor="end">1N4148</text>
</g>
<g font-weight="bold" fill="#000">
<text x="294.5" y="701.7" font-size="11.3">U3A</text>
<text x="732.5" y="530.6" font-size="11.3">U4F</text>
<text x="738" y="571.8" font-size="5.33">CD40106B</text>
</g>
</svg>
</body></html>
